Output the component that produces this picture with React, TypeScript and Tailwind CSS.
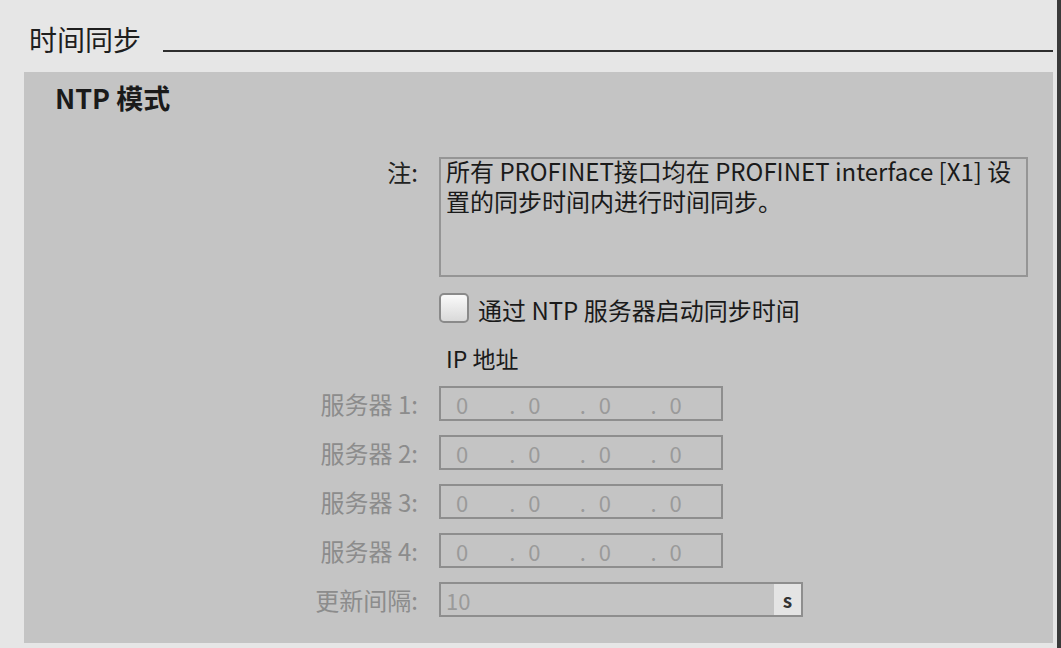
const font = { fontFamily: '"Noto Sans CJK SC", "Noto Sans", sans-serif' };

function IpBox() {
  return (
    <div className="flex h-[35px] w-[284px] items-center border-2 border-[#8e8e8e] pl-[15px] text-[22px] leading-none text-[#9a9a9a]">
      <span className="w-[55px]">0</span>
      {[0, 1, 2].map((i) => (
        <span key={i} className="flex w-[73px]">
          <span className="w-[19px]">.</span>
          <span>0</span>
        </span>
      ))}
    </div>
  );
}

function Label({ children, muted }: { children: React.ReactNode; muted?: boolean }) {
  return (
    <div className={`flex h-[35px] items-center justify-end text-[24px] leading-none ${muted ? "text-[#8c8c8c]" : "text-[#222]"}`}>
      {children}
    </div>
  );
}

export default function App() {
  return (
    <div
      className="flex h-[648px] w-[1061px] flex-col overflow-hidden border-r-4 border-[#3a3a3a] bg-[#e6e6e6]"
      style={font}
    >
      <div className="flex h-[53px] items-end pl-[29px] pr-[4px] pt-[25px]">
        <span className="text-[28px] leading-[28px] text-[#1e1e1e]">时间同步</span>
        <div className="mb-[1px] ml-[22px] h-[2px] flex-1 bg-[#2e2e2e]" />
      </div>

      <div className="ml-[24px] mr-[4px] mt-[19px] h-[571px] bg-[#c4c4c4] pt-[11px]">
        <h2 className="pl-[31px] text-[27px] font-bold leading-[30px] text-[#1a1a1a]">NTP 模式</h2>

        <div className="mt-[44px] grid grid-cols-[394px_1fr] gap-x-[21px]">
          <div className="flex justify-end text-[24px] leading-[30px] text-[#222]">注:</div>
          <div className="h-[120px] w-[589px] border-2 border-[#959595] pl-[5px] text-[24px] leading-[30px] text-[#1a1a1a]">
            <div className="-mt-[3px]">所有 PROFINET接口均在 PROFINET interface [X1] 设</div>
            <div>置的同步时间内进行时间同步。</div>
          </div>

          <div />
          <label className="mt-[13px] flex items-center gap-[9px]">
            <span className="h-[30px] w-[30px] rounded-[5px] border-2 border-[#8a8a8a] bg-gradient-to-b from-[#fafafa] to-[#d9d9d9]" />
            <span className="pt-[5px] text-[24px] leading-[30px] text-[#1a1a1a]">通过 NTP 服务器启动同步时间</span>
          </label>

          <div />
          <div className="mt-[21px] pl-[7px] text-[23px] leading-[24px] text-[#1a1a1a]">IP 地址</div>

          {[1, 2, 3, 4].map((n) => (
            <div key={n} className="contents">
              <div className={n === 1 ? "mt-[16px]" : "mt-[14px]"}>
                <Label muted>服务器 {n}:</Label>
              </div>
              <div className={n === 1 ? "mt-[16px]" : "mt-[14px]"}>
                <IpBox />
              </div>
            </div>
          ))}

          <div className="mt-[14px]">
            <Label muted>更新间隔:</Label>
          </div>
          <div className="mt-[14px] flex h-[35px] w-[364px] items-stretch border-2 border-[#8e8e8e]">
            <span className="flex flex-1 items-center pl-[5px] text-[22px] leading-none text-[#9a9a9a]">10</span>
            <span className="flex w-[27px] items-center justify-center bg-[#e4e4e4] text-[19px] font-bold leading-none text-[#333]">s</span>
          </div>
        </div>
      </div>
    </div>
  );
}
